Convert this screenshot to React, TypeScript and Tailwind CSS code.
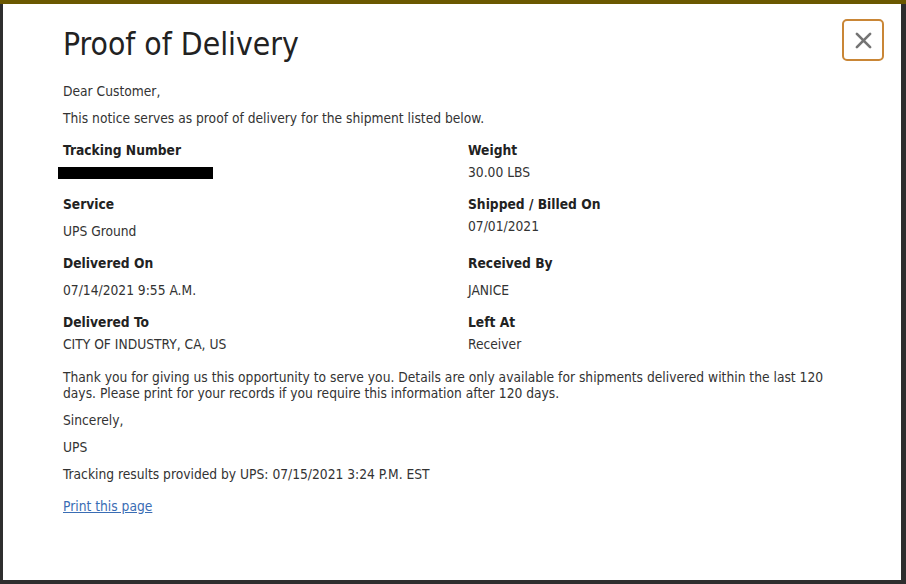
import React from 'react';

const fields = [
    { label: 'Tracking Number', value: null, gap: 'mt-[6px]' },
    { label: 'Weight', value: '30.00 LBS', gap: 'mt-[6px]' },
    { label: 'Service', value: 'UPS Ground', gap: 'mt-[11px]' },
    { label: 'Shipped / Billed On', value: '07/01/2021', gap: 'mt-[6px]' },
    { label: 'Delivered On', value: '07/14/2021 9:55 A.M.', gap: 'mt-[11px]' },
    { label: 'Received By', value: 'JANICE', gap: 'mt-[11px]' },
    { label: 'Delivered To', value: 'CITY OF INDUSTRY, CA, US', gap: 'mt-[6px]' },
    { label: 'Left At', value: 'Receiver', gap: 'mt-[6px]' },
];

export default function App() {
    return (
        <div
            className="w-[906px] h-[584px] flex flex-col bg-[#2e2e2e] border-t-[4px] border-[#6b5800] overflow-hidden"
            style={{ fontFamily: '"DejaVu Sans Condensed", "DejaVu Sans", sans-serif' }}
        >
            {/* modal */}
            <div className="flex-1 ml-[3px] mr-[5px] mb-[4px] bg-white relative text-[#333]">
                <button className="absolute right-[17px] top-[15px] w-[42px] h-[42px] border-2 border-[#c98636] rounded-[5px] flex items-center justify-center">
                    <svg width="17" height="17" viewBox="0 0 18 18">
                        <path d="M2 2 L16 16 M16 2 L2 16" stroke="#747474" strokeWidth="2.8" strokeLinecap="round" />
                    </svg>
                </button>

                <div className="pl-[60px] pr-[60px] pt-[20px] text-[13.7px] leading-[16px]">
                    <h1 className="text-[31.6px] leading-[40px] text-[#222] mb-[19px]">Proof of Delivery</h1>

                    <p className="mb-[11px]">Dear Customer,</p>
                    <p className="mb-[16px]">This notice serves as proof of delivery for the shipment listed below.</p>

                    {/* details */}
                    <div className="grid grid-cols-2 gap-x-[32px] gap-y-[16px] mb-[17px]">
                        {fields.map(f => (
                            <div key={f.label}>
                                <div className="font-bold text-[#222]">{f.label}</div>
                                {f.value === null ? (
                                    <div className="mt-[9px] -ml-[5px] w-[155px] h-[12px] bg-black" />
                                ) : (
                                    <div className={f.gap}>{f.value}</div>
                                )}
                            </div>
                        ))}
                    </div>

                    <p className="mb-[11px]">
                        Thank you for giving us this opportunity to serve you. Details are only available for shipments delivered within the last 120 days. Please print for your records if you require this information after 120 days.
                    </p>
                    <p className="mb-[11px]">Sincerely,</p>
                    <p className="mb-[11px]">UPS</p>
                    <p className="mb-[16px]">Tracking results provided by UPS: 07/15/2021 3:24 P.M. EST</p>
                    <a href="#" className="text-[#3a6db4] underline">Print this page</a>
                </div>
            </div>
        </div>
    );
}
